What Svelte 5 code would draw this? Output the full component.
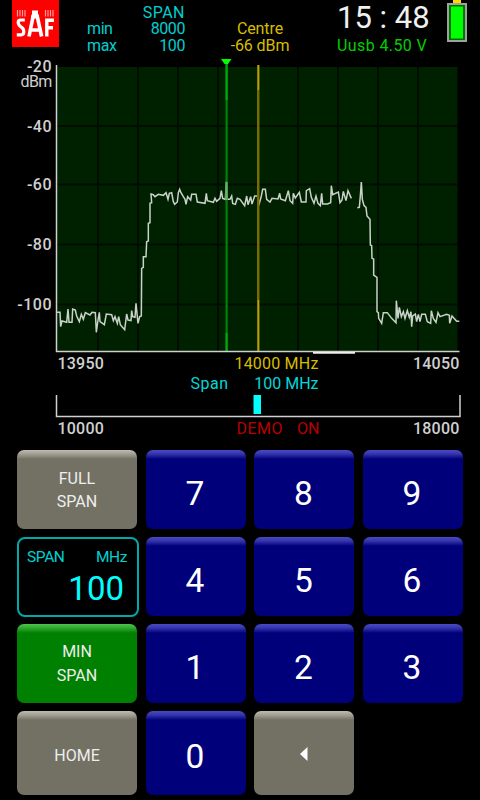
<script lang="ts">
    const levels = [
        { label: '-20', y: 67 },
        { label: '-40', y: 126 },
        { label: '-60', y: 184.5 },
        { label: '-80', y: 244.5 },
        { label: '-100', y: 304.5 },
    ];
    const columns = [98, 138, 178, 218, 258, 298, 338, 378, 418];

    // trace halves, three units per pixel
    const lower = '168,457 180,457 182,500 186,483 200,487 204,447 207,487 216,487 218,447 226,450 230,468 238,485 244,463 250,478 256,458 270,465 276,457 286,458 289,517 293,487 298,457 300,485 313,494 319,462 335,464 340,482 345,470 352,490 356,470 361,494 374,509 380,462 384,480 393,482 395,452 398,470 405,472 408,430 414,490 419,470 424,468 425,325 430,322 430,290 438,290 440,245 445,243 445,190 450,188 450,130 455,128 453,102 460,104 465,110 475,103 490,106 498,98 504,118 508,100 515,98 520,125 524,133 532,126 535,98 539,88 543,98 550,110 555,118 558,133 563,110 572,120 575,103 588,103 592,126 615,130 619,100 622,122 640,127 645,115 650,124 660,115 664,92 668,115 676,118 679,65 682,118 690,118 695,108 698,130 706,133 712,115 720,118 734,137 740,108 744,134 752,110 756,132 764,108 772,108';
    const upper = '52,108 58,130 64,108 68,88 76,88 80,118 90,126 96,115 114,117 119,100 122,117 136,122 145,92 150,122 158,130 160,100 166,114 178,97 184,126 198,126 199,92 209,86 214,112 222,130 228,108 234,130 241,137 245,100 248,132 262,132 272,128 274,77 278,104 295,96 300,128 306,120 310,94 318,122 324,92 334,115';
    const tail = '352,143 358,142 361,108 364,66 367,118 372,137 378,142 381,168 390,178 391,255 395,257 396,295 401,297 401,345 411,352 411,455 415,458 416,475 425,490 430,458 442,458 455,475 468,488 469,422 474,475 478,442 484,470 490,455 495,475 502,452 508,472 513,455 515,500 518,468 526,462 530,485 535,463 540,485 545,463 556,463 562,485 572,490 574,452 580,475 588,487 594,458 600,470 620,463 628,466 629,490 636,468 650,484 658,484';

    const rows = [
        [{ text: 'FULL\nSPAN', kind: 'grey' }, { text: '7' }, { text: '8' }, { text: '9' }],
        [{ text: '', kind: 'entry' }, { text: '4' }, { text: '5' }, { text: '6' }],
        [{ text: 'MIN\nSPAN', kind: 'green' }, { text: '1' }, { text: '2' }, { text: '3' }],
        [{ text: 'HOME', kind: 'grey home' }, { text: '0' }, { text: '', kind: 'back' }],
    ];
</script>

<main>
    <header>
        <svg class="logo" width="47" height="47" viewBox="0 0 47 47">
            <rect width="47" height="47" fill="#f00" />
            <path d="M5.500 10v6.500M8 10v6.500M10.500 10v6.500M13 10v6.500M33.500 10v6.500M36 10v6.500M38.500 10v6.500M41 10v6.500" stroke="#ff9c9c" stroke-width="1.200" />
            <path d="M12.800 20H8.500Q6.200 20 6.200 22.500Q6.200 25 9 26.800Q11.800 28.500 11.800 31.500Q11.800 34.800 9 34.800H4.800" fill="none" stroke="#fff" stroke-width="3.200" />
            <path d="M17 36.500L21.200 16H25.200L29.600 36.500M19 30H28" fill="none" stroke="#fff" stroke-width="3.600" />
            <path d="M20 10.500h6v5h1v3h-8v-3h1z" fill="#fff" />
            <path d="M34.800 36.500V20.200H42M35 27.800H41" fill="none" stroke="#fff" stroke-width="3.400" />
        </svg>
        <div class="limits">
            <span></span><span class="title">SPAN</span>
            <span>min</span><span>8000</span>
            <span>max</span><span>100</span>
        </div>
        <div class="centre">Centre<br />-66 dBm</div>
        <div class="status">
            <div class="clock">15 : 48</div>
            <div class="usb">Uusb 4.50 V</div>
        </div>
        <svg class="battery" width="20" height="43" viewBox="0 0 20 43">
            <rect x="6" y="0" width="8" height="4" fill="#ffd800" />
            <rect x="1" y="4" width="18" height="37" fill="#007000" stroke="#a0a0a0" stroke-width="2" />
            <rect x="4" y="6.500" width="12" height="32" fill="#0f0" />
        </svg>
    </header>

    <svg class="plot" width="480" height="385" viewBox="0 55 480 385">
        <rect x="57" y="67" width="400.500" height="284" fill="#002100" />
        {#each columns as x}
            <line x1={x} x2={x} y1="67" y2="351" stroke="#000d00" stroke-width="2" />
        {/each}
        {#each levels as level, i}
            {#if i > 0}
                <line x1="57" x2="457" y1={level.y} y2={level.y} stroke="#000d00" stroke-width="2" />
            {/if}
            <text x="52" y={level.y + (i ? 5.800 : 4.800)} text-anchor="end" class="level">{level.label}</text>
        {/each}
        <text x="51.500" y="87" text-anchor="end" class="unit">dBm</text>

        <g class="trace">
            <polyline points={lower} transform="translate(0 160) scale(.33333)" />
            <polyline points={upper} transform="translate(240 160) scale(.33333)" />
            <polyline points={tail} transform="translate(240 160) scale(.33333)" />
        </g>
        <rect x="225.500" y="63" width="2.200" height="288" fill="#008208" />
        <path d="M226.600 63V100M226.600 333V351" stroke="#00a810" stroke-width="2" />
        <path d="M226.600 182V200" stroke="#6fae6f" stroke-width="2" />
        <path d="M221 59h10.500l-3.500 5h-3.500z" fill="#0f0" />
        <rect x="257" y="65" width="2.500" height="286" fill="#786b00" />
        <path d="M258.400 65V90M258.400 300V351" stroke="#b8a200" stroke-width="1.500" />
        <path d="M56.500 65V351.500H459.500" class="axis" />
        <path d="M313 352.800h42" stroke="#eee" stroke-width="1.800" />

        <text x="57.500" y="369" class="freq">13950</text>
        <text x="276.500" y="369" text-anchor="middle" class="yellow">14000 MHz</text>
        <text x="459.500" y="369" text-anchor="end" class="freq">14050</text>
        <text x="190.500" y="388.500" class="cyan spaced">Span</text>
        <text x="318.500" y="388.500" text-anchor="end" class="cyan">100 MHz</text>

        <path d="M56.500 395V416.500H460V395" class="axis" />
        <rect x="253.500" y="395" width="7.500" height="19" fill="#0ff" />
        <text x="57.500" y="433.500" class="freq">10000</text>
        <text x="236.500" y="433.500" class="red spaced">DEMO</text>
        <text x="297" y="433.500" class="red">ON</text>
        <text x="459.500" y="433.500" text-anchor="end" class="freq">18000</text>
    </svg>

    <div class="keypad">
        {#each rows as row}
            {#each row as key}
                {#if key.kind === 'entry'}
                    <div class="entry">
                        <div class="entry-head"><span>SPAN</span><span>MHz</span></div>
                        <div class="entry-value">100</div>
                    </div>
                {:else if key.kind === 'back'}
                    <button class="key grey" aria-label="Delete">
                        <svg width="8" height="14" viewBox="0 0 8 14"><path d="M0 7L7.500 0V14Z" fill="#fff" /></svg>
                    </button>
                {:else}
                    <button class="key {key.kind ?? 'digit'}">{key.text}</button>
                {/if}
            {/each}
        {/each}
    </div>
</main>

<style>
    :global(body) {
        background: #000;
    }
    main {
        width: 480px;
        height: 800px;
        overflow: hidden;
        background: #000;
        font-family: Roboto, "Liberation Sans", sans-serif;
        font-size: 16px;
        color: #d8d8d8;
    }
    header {
        display: flex;
        align-items: flex-start;
        height: 55px;
    }
    svg {
        display: block;
        flex: none;
    }
    .logo {
        margin-left: 12px;
    }
    .limits {
        display: grid;
        grid-template-columns: 49px 50px;
        grid-auto-rows: 16.400px;
        line-height: 16.400px;
        letter-spacing: -0.4px;
        margin: 5px 0 0 28px;
        color: #00cfcf;
    }
    .limits span:nth-child(even) {
        margin-right: 1px;
        text-align: right;
    }
    .limits .title {
        letter-spacing: 0.5px;
    }
    .centre {
        width: 80px;
        margin: 21.400px 0 0 34px;
        line-height: 16.400px;
        letter-spacing: -0.1px;
        text-align: center;
        white-space: nowrap;
        color: #d6bd00;
    }
    .status {
        width: 100px;
        margin-left: 37px;
        white-space: nowrap;
    }
    .clock {
        padding-top: 1px;
        font-size: 31px;
        line-height: 34px;
        color: #f0f0f0;
    }
    .usb {
        margin-top: 3px;
        line-height: 16px;
        color: #00d000;
        letter-spacing: 0.4px;
    }
    .battery {
        margin-left: 10px;
    }
    text {
        fill: #d0d0d0;
    }
    .level {
        font-weight: 500;
        letter-spacing: 0.5px;
    }
    .unit {
        letter-spacing: -0.7px;
    }
    .freq {
        font-weight: 500;
        letter-spacing: 0.2px;
    }
    .spaced {
        letter-spacing: 0.5px;
    }
    .yellow {
        fill: #d6bd00;
        letter-spacing: 0.2px;
    }
    .cyan {
        fill: #00d8d8;
    }
    .red {
        fill: #b80000;
    }
    .axis {
        fill: none;
        stroke: #d0d0d0;
        stroke-width: 1.5;
    }
    .trace polyline {
        fill: none;
        stroke: #c8d2c8;
        stroke-width: 1.5;
        vector-effect: non-scaling-stroke;
    }
    .keypad {
        display: grid;
        grid-template-columns: 120px 100px 100px 100px;
        grid-template-rows: 79px 79px 79px 84px;
        gap: 8px 8.500px;
        margin: 10px 0 0 17px;
    }
    .key {
        display: flex;
        align-items: center;
        justify-content: center;
        border: 0;
        border-radius: 7px;
        padding: 0;
        font-family: inherit;
        font-size: 16px;
        line-height: 23px;
        white-space: pre;
        color: #eee;
    }
    .digit {
        padding: 7px 1px 0 0;
        font-size: 33.5px;
        color: #fff;
        background: linear-gradient(#4a4ac8, #3434ac 4px, #00007a 9px);
    }
    .grey {
        padding-top: 1px;
        background: linear-gradient(#c0bcae, #99978a 5px, #737163 9px);
    }
    .home {
        padding-top: 4px;
    }
    .green {
        line-height: 24px;
        background: linear-gradient(#4cc84c, #28a028 5px, #008000 9px);
    }
    .entry {
        box-sizing: border-box;
        width: 122px;
        height: 80px;
        padding: 8px 13px 0 8px;
        border: 2px solid #00a8a8;
        border-radius: 8px;
        color: #00d0d0;
    }
    .entry-head {
        display: flex;
        justify-content: space-between;
        margin-right: -3px;
        font-size: 15.5px;
        letter-spacing: -0.4px;
        line-height: 20px;
    }
    .entry-value {
        font-size: 33px;
        line-height: 43px;
        text-align: right;
        color: #0ff;
    }
</style>
